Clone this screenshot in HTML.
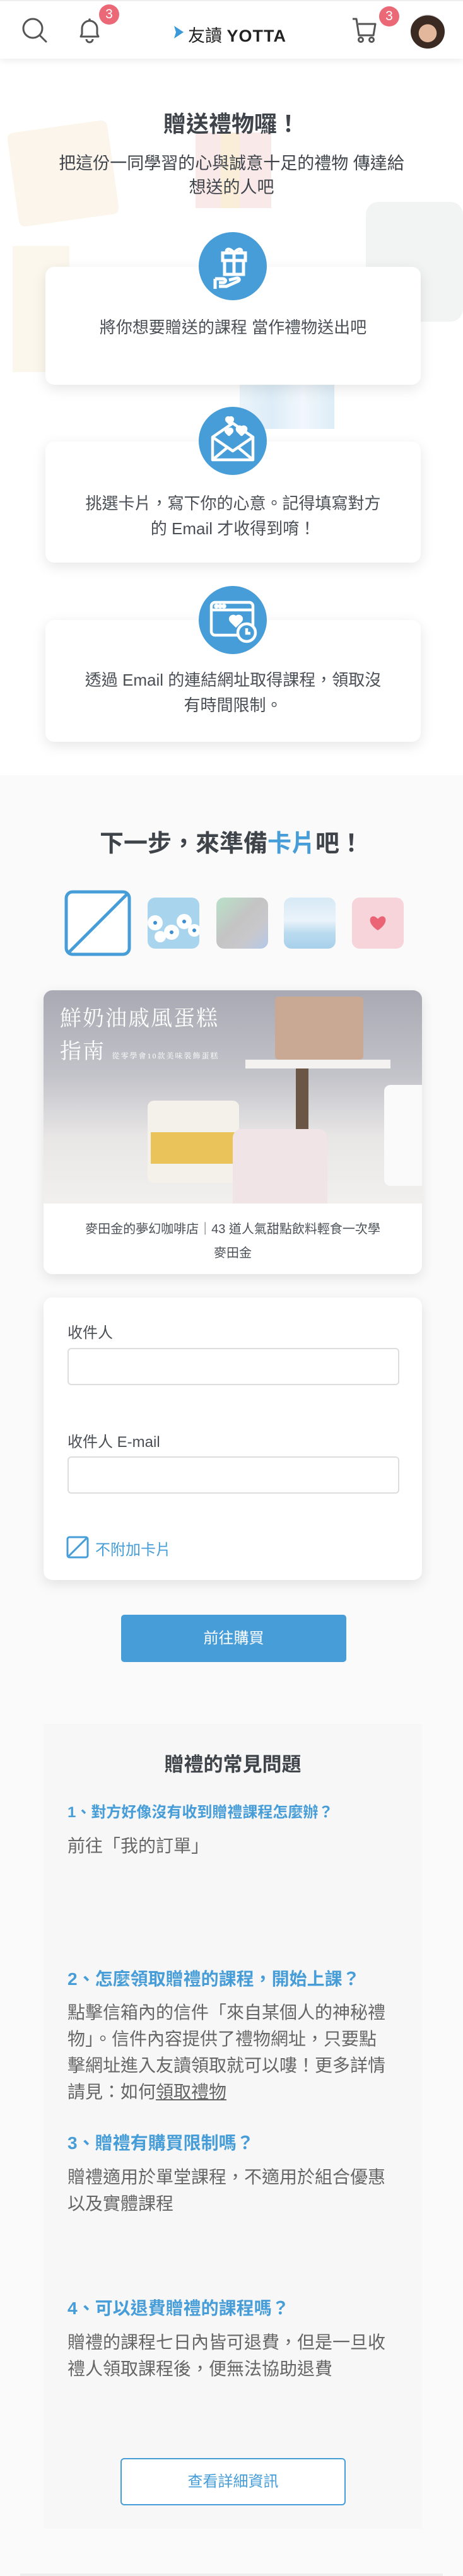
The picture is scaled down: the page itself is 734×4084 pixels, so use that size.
<!DOCTYPE html>
<html><head><meta charset="utf-8">
<style>
*{margin:0;padding:0;box-sizing:border-box}
body{width:734px;height:4084px;background:#fafafa;font-family:"Liberation Sans","Noto Sans CJK TC",sans-serif;color:#4a4f55;position:relative;overflow:hidden}
.abs{position:absolute}
.top{position:absolute;left:0;top:0;width:734px;height:1229px;background:#fff;overflow:hidden}
.hdr{position:absolute;left:0;top:0;width:734px;height:93px;background:#fff;box-shadow:0 4px 10px rgba(0,0,0,.07);z-index:5;border-top:2px solid #eee}
.badge{position:absolute;width:32px;height:32px;border-radius:50%;background:#eb6877;color:#fff;font-size:21px;text-align:center;line-height:32px}
.card{position:absolute;left:72px;width:595px;background:#fff;border-radius:14px;box-shadow:0 6px 22px rgba(0,0,0,.1);text-align:center;font-size:26px;line-height:40px;color:#4a4f55;white-space:nowrap}
.circ{position:absolute;left:315px;width:108px;height:108px;border-radius:50%;background:#479dd8;z-index:3}
.ctr{text-align:center}
.th{position:absolute;top:1423px;width:82px;height:81px;border-radius:12px;overflow:hidden}
.inp{position:absolute;left:107px;width:526px;height:59px;border:2px solid #ddd;border-radius:6px;background:#fff}
.lbl{position:absolute;left:107px;font-size:24px;color:#4a4f55}
.q{position:absolute;left:107px;color:#479dd8;font-weight:bold;white-space:nowrap}
.a{position:absolute;left:107px;width:560px;font-size:28px;line-height:42px;color:#666;white-space:nowrap}
</style></head><body>
<div class="top">
  <div class="abs" style="left:20px;top:200px;width:160px;height:150px;background:#fbf3e6;transform:rotate(-8deg);border-radius:10px;opacity:.8"></div>
  <div class="abs" style="left:310px;top:210px;width:120px;height:120px;background:#f8e3e3;opacity:.8"></div>
  <div class="abs" style="left:350px;top:210px;width:30px;height:120px;background:#fbefd4;opacity:.8"></div>
  <div class="abs" style="left:580px;top:320px;width:154px;height:190px;background:#f0f3f2;border-radius:20px;opacity:.9"></div>
  <div class="abs" style="left:20px;top:390px;width:90px;height:200px;background:#fbf3e6;opacity:.7"></div>
  <div class="abs" style="left:380px;top:600px;width:150px;height:80px;background:linear-gradient(90deg,#e6f1f9,#d4e8f5,#eef5fb,#d4e8f5);opacity:.8"></div>
</div>
<div class="hdr">
  <svg class="abs" style="left:33px;top:24px" width="44" height="44" viewBox="0 0 44 44"><circle cx="19" cy="19" r="15" fill="none" stroke="#555" stroke-width="3"/><line x1="30" y1="30" x2="40" y2="40" stroke="#555" stroke-width="3" stroke-linecap="round"/></svg>
  <svg class="abs" style="left:120px;top:24px" width="44" height="44" viewBox="0 0 44 44"><path d="M8 32 L10 28 V19 a12 12 0 0 1 24 0 V28 L36 32 Z" fill="none" stroke="#555" stroke-width="3" stroke-linejoin="round"/><path d="M17 36 a5 5 0 0 0 10 0" fill="none" stroke="#555" stroke-width="3"/><circle cx="22" cy="5" r="1.8" fill="#555"/></svg>
  <div class="badge" style="left:157px;top:5px">3</div>
  <svg class="abs" style="left:274px;top:37px" width="18" height="24" viewBox="0 0 18 24"><path d="M2 2 L17 12 L2 22 L5 12 Z" fill="#3a9ad9"/></svg>
  <div class="abs" style="left:298px;top:33px;font-size:27px;color:#222;white-space:nowrap">友讀 <b style="font-family:'Liberation Sans',sans-serif;letter-spacing:1px">YOTTA</b></div>
  <svg class="abs" style="left:556px;top:24px" width="46" height="44" viewBox="0 0 46 44"><path d="M3 4 H9 L13 30 H36 L39 12 H12" fill="none" stroke="#555" stroke-width="3" stroke-linejoin="round"/><circle cx="16" cy="37" r="3.5" fill="none" stroke="#555" stroke-width="3"/><circle cx="33" cy="37" r="3.5" fill="none" stroke="#555" stroke-width="3"/></svg>
  <div class="badge" style="left:601px;top:8px">3</div>
  <div class="abs" style="left:651px;top:21px;width:54px;height:54px;border-radius:50%;background:radial-gradient(circle at 50% 55%,#e2b79c 0 35%,#3b2a22 36% 70%,#ddd 71%)"></div>
</div>

<div class="abs ctr" style="left:0;top:168px;width:734px;font-size:36px;font-weight:bold;color:#3f444a">贈送禮物囉！</div>
<div class="abs ctr" style="left:0;top:240px;width:734px;font-size:27px;line-height:38px;color:#3f444a;white-space:nowrap">把這份一同學習的心與誠意十足的禮物 傳達給<br>想送的人吧</div>

<div class="circ" style="top:368px"><svg width="108" height="108" viewBox="0 0 108 108" fill="none" stroke="#fff" stroke-width="5"><rect x="38" y="33" width="36" height="12"/><rect x="41" y="45" width="30" height="22"/><line x1="56" y1="33" x2="56" y2="67"/><path d="M56 33 c-10 -12 -16 -2 -8 0 M56 33 c10 -12 16 -2 8 0"/><path d="M26 74 v16 M26 74 h12 c6 0 6 6 0 6 h-6 M32 86 h12 l18 -8 c4 -2 2 -6 -2 -5 l-12 3"/></svg></div>
<div class="card" style="top:423px;height:187px;padding-top:76px">將你想要贈送的課程 當作禮物送出吧</div>

<div class="circ" style="top:645px"><svg width="108" height="108" viewBox="0 0 108 108" fill="none" stroke="#fff" stroke-width="4.5" stroke-linejoin="round"><path d="M22 48 L54 26 L86 48 V84 H22 Z"/><path d="M22 48 L54 70 L86 48"/><path d="M22 84 L46 64 M86 84 L62 64"/><path d="M45 22 c-3-4 3-7 4-3 c1-4 7-1 4 3 l-4 4 z" fill="#fff"/><path d="M62 38 c-4-5 4-9 6-4 c2-5 10-1 6 4 l-6 6 z" fill="#fff"/><path d="M44 40 c-3-4 3-7 4-3 c1-4 7-1 4 3 l-4 4z" fill="#fff"/></svg></div>
<div class="card" style="top:700px;height:192px;padding-top:78px">挑選卡片，寫下你的心意。記得填寫對方<br>的 Email 才收得到唷！</div>

<div class="circ" style="top:929px"><svg width="108" height="108" viewBox="0 0 108 108" fill="none" stroke="#fff" stroke-width="4.5"><rect x="20" y="26" width="66" height="52" rx="6"/><line x1="20" y1="38" x2="86" y2="38"/><circle cx="28" cy="32" r="1.5" fill="#fff"/><circle cx="34" cy="32" r="1.5" fill="#fff"/><circle cx="40" cy="32" r="1.5" fill="#fff"/><path d="M52 56 c-6-6 4-12 7-5 c3-7 13-1 7 5 l-7 7z" fill="#fff"/><circle cx="76" cy="74" r="14" fill="#479dd8"/><path d="M76 67 v8 h6"/></svg></div>
<div class="card" style="top:983px;height:193px;padding-top:75px">透過 Email 的連結網址取得課程，領取沒<br>有時間限制。</div>

<div class="abs ctr" style="left:0;top:1306px;width:734px;font-size:38px;font-weight:bold;color:#3f444a">下一步，來準備<span style="color:#479dd8">卡片</span>吧！</div>

<svg class="abs" style="left:102px;top:1411px" width="106" height="105" viewBox="0 0 106 105"><rect x="3" y="3" width="100" height="99" rx="10" fill="#fff" stroke="#479dd8" stroke-width="5"/><line x1="8" y1="98" x2="100" y2="6" stroke="#479dd8" stroke-width="5"/></svg>
<div class="th" style="left:234px;background:#a9d4ee"><svg width="82" height="81"><g fill="#fff"><circle cx="12" cy="40" r="12"/><circle cx="38" cy="55" r="12"/><circle cx="58" cy="38" r="12"/><circle cx="74" cy="52" r="10"/><circle cx="20" cy="62" r="9"/></g><g fill="#3a8fd4"><circle cx="12" cy="40" r="3"/><circle cx="38" cy="55" r="3"/><circle cx="58" cy="38" r="3"/><circle cx="74" cy="52" r="3"/></g></svg></div>
<div class="th" style="left:343px;background:linear-gradient(135deg,#b8e1c8,#c4c4c4 45%,#c8c8cc 70%,#b4c8e8)"></div>
<div class="th" style="left:450px;background:linear-gradient(180deg,#d6e9f5,#eaf3fa 45%,#b9dbef 70%,#a8d0ea)"></div>
<div class="th" style="left:558px;background:#f7d4da"><svg width="82" height="81"><path d="M41 52 c-22-14 -10-30 0-18 c10-12 22 4 0 18z" fill="#ea6476"/></svg></div>

<div class="abs" style="left:69px;top:1570px;width:600px;height:450px;background:#fff;border-radius:14px;box-shadow:0 6px 20px rgba(0,0,0,.1);overflow:hidden">
  <div class="abs" style="left:0;top:0;width:600px;height:338px;background:linear-gradient(180deg,#a9a9b3 0%,#c3c3ca 40%,#e9e7e6 70%,#f2f0ee 100%)"></div>
  <div class="abs" style="left:367px;top:10px;width:140px;height:100px;background:#c9a993;border-radius:6px"></div>
  <div class="abs" style="left:320px;top:110px;width:230px;height:14px;background:#f3f2f0"></div>
  <div class="abs" style="left:400px;top:124px;width:20px;height:110px;background:#6b5645"></div>
  <div class="abs" style="left:165px;top:175px;width:145px;height:130px;background:#f4f0ea;border-radius:10px"></div>
  <div class="abs" style="left:170px;top:225px;width:135px;height:50px;background:#eac45a"></div>
  <div class="abs" style="left:300px;top:220px;width:150px;height:118px;background:#f0e4e6;border-radius:14px 14px 0 0"></div>
  <div class="abs" style="left:540px;top:150px;width:60px;height:160px;background:#fafafa;border-radius:10px 0 0 10px"></div>
  <div class="abs" style="left:26px;top:20px;font-family:'Liberation Serif','Noto Serif CJK SC',serif;font-size:34px;color:#fff;letter-spacing:2px;line-height:52px">鮮奶油戚風蛋糕<br>指南 <span style="font-size:12px">從零學會10款美味裝飾蛋糕</span></div>
  <div class="abs" style="left:0;top:338px;width:600px;padding-top:22px;text-align:center;font-size:20px;line-height:38px;color:#4a4f55">麥田金的夢幻咖啡店｜43 道人氣甜點飲料輕食一次學<br>麥田金</div>
</div>

<div class="abs" style="left:69px;top:2057px;width:600px;height:448px;background:#fff;border-radius:14px;box-shadow:0 6px 20px rgba(0,0,0,.1)"></div>
<div class="lbl" style="top:2093px">收件人</div>
<div class="inp" style="top:2137px"></div>
<div class="lbl" style="top:2266px">收件人 E-mail</div>
<div class="inp" style="top:2309px"></div>
<svg class="abs" style="left:105px;top:2435px" width="36" height="36" viewBox="0 0 36 36"><rect x="2" y="2" width="32" height="32" rx="3" fill="none" stroke="#479dd8" stroke-width="3"/><line x1="4" y1="32" x2="32" y2="4" stroke="#479dd8" stroke-width="3"/></svg>
<div class="abs" style="left:151px;top:2437px;font-size:24px;color:#479dd8">不附加卡片</div>

<div class="abs ctr" style="left:192px;top:2560px;width:357px;height:75px;background:#479dd8;border-radius:5px;color:#fff;font-size:24px;line-height:75px">前往購買</div>

<div class="abs" style="left:69px;top:2733px;width:600px;height:1276px;background:#f7f7f7"></div>
<div class="abs ctr" style="left:69px;top:2772px;width:600px;font-size:31px;font-weight:bold;color:#3f444a">贈禮的常見問題</div>
<div class="q" style="top:2853px;font-size:24px">1、對方好像沒有收到贈禮課程怎麼辦？</div>
<div class="a" style="top:2906px">前往「我的訂單」</div>
<div class="q" style="top:3116px;font-size:28px">2、怎麼領取贈禮的課程，開始上課？</div>
<div class="a" style="top:3170px">點擊信箱內的信件「來自某個人的神秘禮<br>物」。信件內容提供了禮物網址，只要點<br>擊網址進入友讀領取就可以嘍！更多詳情<br>請見：如何<u>領取禮物</u></div>
<div class="q" style="top:3376px;font-size:28px">3、贈禮有購買限制嗎？</div>
<div class="a" style="top:3431px">贈禮適用於單堂課程，不適用於組合優惠<br>以及實體課程</div>
<div class="q" style="top:3638px;font-size:28px">4、可以退費贈禮的課程嗎？</div>
<div class="a" style="top:3693px">贈禮的課程七日內皆可退費，但是一旦收<br>禮人領取課程後，便無法協助退費</div>
<div class="abs ctr" style="left:191px;top:3897px;width:357px;height:75px;border:2px solid #479dd8;border-radius:6px;color:#479dd8;font-size:24px;line-height:71px;background:#fff">查看詳細資訊</div>
<div class="abs" style="left:32px;top:4080px;width:670px;height:4px;background:#eee"></div>
</body></html>
